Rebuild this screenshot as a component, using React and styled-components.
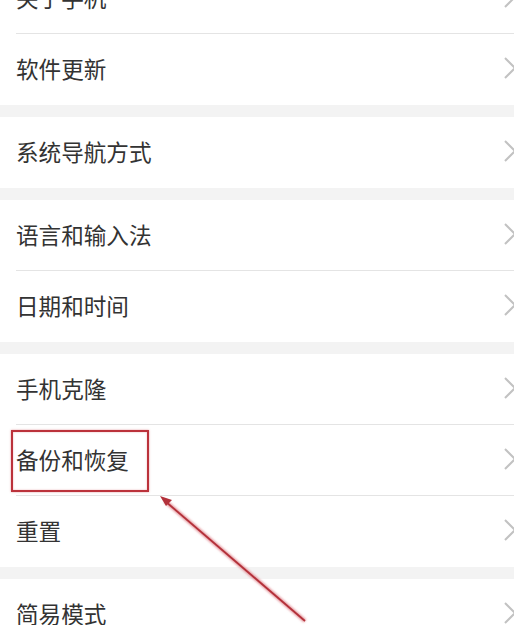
import React from 'react';
import styled, { createGlobalStyle } from 'styled-components';

const groups = [
    ['关于手机', '软件更新'],
    ['系统导航方式'],
    ['语言和输入法', '日期和时间'],
    ['手机克隆', '备份和恢复', '重置'],
    ['简易模式'],
];

const Chevron = () => (
    <ChevronBox width="14" height="24" viewBox="0 0 14 24">
        <polyline points="2,2 12,12 2,22" fill="none" stroke="#c2c2c2" strokeWidth="2" />
    </ChevronBox>
);

const App = () => {
    return (
        <>
            <GlobalStyle />
            <Page>
                <List>
                    {groups.map((items, gi) => (
                        <Group key={gi}>
                            {items.map((label, i) => (
                                <Row key={label}>
                                    <RowInner $divider={i < items.length - 1}>
                                        <Label>{label}</Label>
                                        <Chevron />
                                    </RowInner>
                                    {label === '备份和恢复' && <Highlight />}
                                </Row>
                            ))}
                        </Group>
                    ))}
                </List>
                <Arrow width="514" height="625" viewBox="0 0 514 625">
                    <defs>
                        <filter id="glow" x="-20%" y="-20%" width="140%" height="140%">
                            <feGaussianBlur stdDeviation="0.8" />
                        </filter>
                    </defs>
                    <line x1="305" y1="621" x2="165" y2="501" stroke="#e59aa0" strokeWidth="4" filter="url(#glow)" />
                    <line x1="305" y1="621" x2="165" y2="501" stroke="#b3313a" strokeWidth="1.8" />
                    <polygon points="160,496 172,500 166,506" fill="#b3313a" />
                </Arrow>
            </Page>
        </>
    );
};

export default App;

const GlobalStyle = createGlobalStyle`
    html, body {
        margin: 0;
        padding: 0;
        background: #f3f3f3;
        overflow: hidden;
    }
    body {
        font-family: "Noto Sans CJK SC", "Noto Sans", sans-serif;
    }
`

const Page = styled.div`
    position: relative;
    width: 514px;
    height: 625px;
    overflow: hidden;
    background: #f3f3f3;
`

const List = styled.div`
    display: flex;
    flex-direction: column;
    gap: 12px;
    margin-top: -37px;
`

const Group = styled.div`
    background: #ffffff;
    display: flex;
    flex-direction: column;
`

const Row = styled.div`
    position: relative;
    height: 71px;
    padding-left: 16px;
    box-sizing: border-box;
`

const RowInner = styled.div`
    height: 100%;
    box-sizing: border-box;
    display: flex;
    align-items: center;
    justify-content: space-between;
    border-bottom: 1px solid ${p => (p.$divider ? '#e4e4e4' : 'transparent')};
`

const Label = styled.span`
    font-size: 22.6px;
    line-height: 1;
    color: #333333;
    padding-top: 1px;
`

const ChevronBox = styled.svg`
    display: block;
    margin-right: -3px;
    margin-top: -2px;
    flex-shrink: 0;
`

const Highlight = styled.div`
    position: absolute;
    left: 11px;
    top: 5px;
    width: 138px;
    height: 62px;
    box-sizing: border-box;
    border: 2px solid #bb323b;
    box-shadow: 0 0 2px rgba(200, 60, 70, 0.5), inset 0 0 2px rgba(200, 60, 70, 0.4);
`

const Arrow = styled.svg`
    position: absolute;
    left: 0;
    top: 0;
    pointer-events: none;
`
